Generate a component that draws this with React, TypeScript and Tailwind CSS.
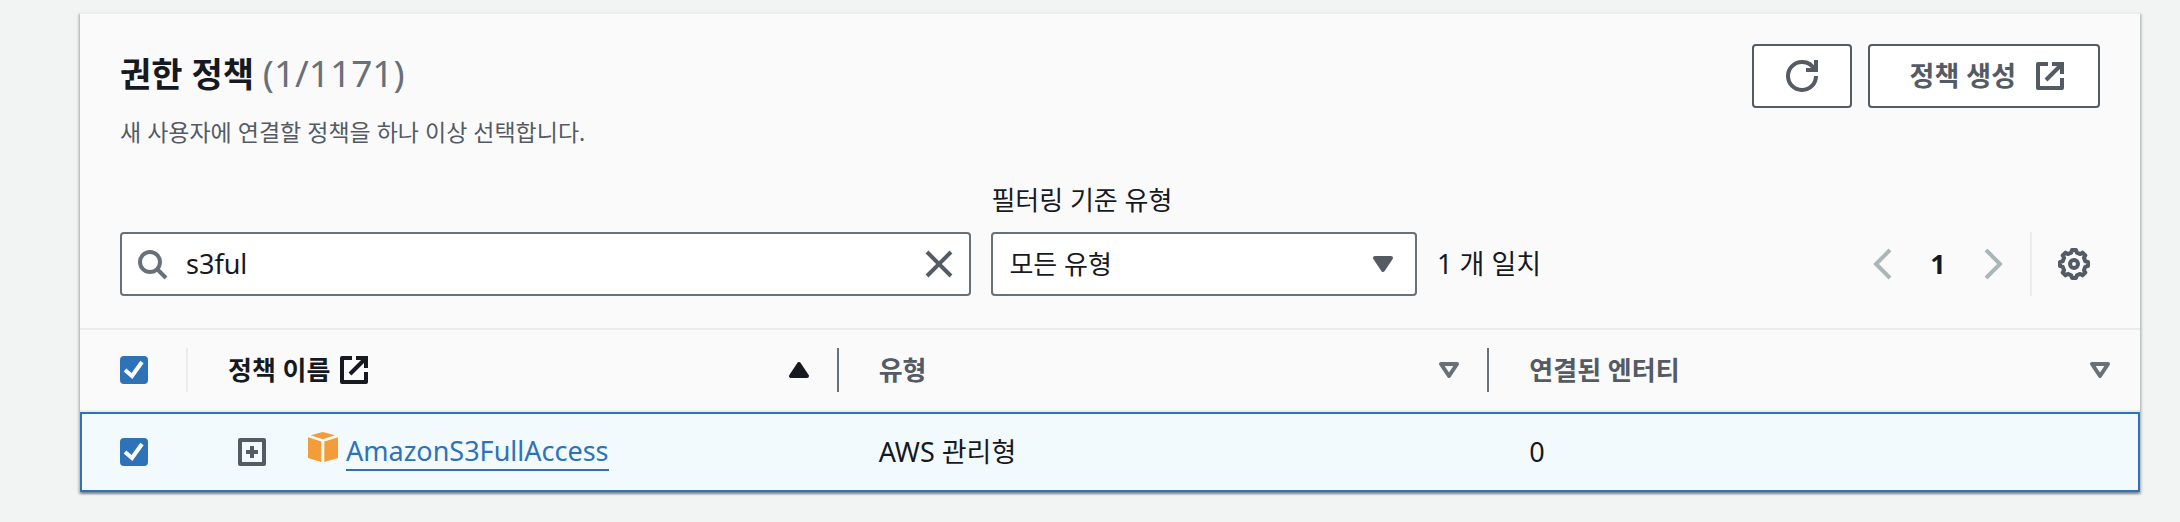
import { useState, type ReactNode } from "react";

const controlBorder = "rounded-[4px] border-2 border-[#687078] bg-white";
const btnNormal =
  "flex h-16 items-center justify-center rounded-[4px] border-2 border-[#545b64] bg-white font-bold text-[#545b64]";

// ─── icons ───────────────────────────────────────────────────────────────────

function Icon({ children, className = "" }: { children: ReactNode; className?: string }) {
  return (
    <svg
      viewBox="0 0 16 16"
      className={`size-8 shrink-0 ${className}`}
      fill="none"
      stroke="currentColor"
      strokeWidth={2}
      aria-hidden="true"
    >
      {children}
    </svg>
  );
}

const ExternalIcon = ({ className }: { className?: string }) => (
  <Icon className={className}>
    <path d="M9 2h5v5" />
    <path d="M6 10l8-8" />
    <path strokeLinejoin="round" d="M14 9.05V14H2V2h5" />
  </Icon>
);

const RefreshIcon = () => (
  <Icon>
    <path d="M10 5h5V0" />
    <path strokeLinejoin="round" d="M15 8a6.957 6.957 0 0 1-7 7 6.957 6.957 0 0 1-7-7 6.957 6.957 0 0 1 7-7 6.87 6.87 0 0 1 6.3 4" />
  </Icon>
);

const SearchIcon = ({ className }: { className?: string }) => (
  <Icon className={className}>
    <circle cx="7" cy="7" r="5" />
    <path d="M15 15l-4.5-4.5" />
  </Icon>
);

const GearIcon = () => (
  <Icon>
    <path
      strokeLinejoin="round"
      d="M7 1h2l.4 1.3 1.7.75 1.14-.71 1.42 1.42-.71 1.13.75 1.81L15 7v2l-1.3.3-.75 1.81.71 1.13-1.42 1.42-1.14-.71-1.7.75L9 15H7l-.4-1.3-1.7-.75-1.14.71-1.42-1.42.71-1.13-.75-1.81L1 9V7l1.3-.3.75-1.81-.71-1.13 1.42-1.42 1.14.71 1.7-.75z"
    />
    <circle cx="8" cy="8" r="2" />
  </Icon>
);

const CubeIcon = () => (
  <svg viewBox="0 0 30 30" className="size-[30px] shrink-0 fill-[#f29d38]" aria-hidden="true">
    <path d="M14.7 0L27 3.3 14.7 7.3 2.7 3.3z" />
    <path d="M0 5.2l13.3 4.4V30L0 26z" />
    <path d="M30 5.2L16.3 9.6V30L30 26z" />
  </svg>
);

function SortIcon({ sort }: { sort: "asc" | "none" }) {
  return sort === "asc" ? (
    <Icon>
      <path strokeLinejoin="round" fill="currentColor" d="M4 11h8L8 5l-4 6z" />
    </Icon>
  ) : (
    <Icon className="text-[#687078]">
      <path strokeLinejoin="round" d="M4 5h8l-4 6-4-6z" />
    </Icon>
  );
}

// ─── controls ────────────────────────────────────────────────────────────────

function Checkbox({ label, checked, onChange }: { label: string; checked: boolean; onChange: (v: boolean) => void }) {
  return (
    <label className="grid size-7">
      <input
        type="checkbox"
        checked={checked}
        onChange={(e) => onChange(e.target.checked)}
        aria-label={label}
        className="col-start-1 row-start-1 size-7 appearance-none rounded-[4px] border-2 border-[#687078] bg-white checked:border-[#2e72b8] checked:bg-[#2e72b8]"
      />
      {checked && (
        <svg viewBox="0 0 14 14" className="pointer-events-none col-start-1 row-start-1 size-7" fill="none" stroke="#fff" strokeWidth={2} aria-hidden="true">
          <path d="M2.5 7L6 10l5-7" />
        </svg>
      )}
    </label>
  );
}

function HeaderCell({
  children,
  sort,
  last = false,
}: {
  children: ReactNode;
  sort: "asc" | "none";
  last?: boolean;
}) {
  return (
    <th
      scope="col"
      aria-sort={sort === "asc" ? "ascending" : "none"}
      className={`border-y-2 border-[#eaeded] py-[18px] text-left text-[26px] font-bold ${sort === "asc" ? "text-[#16191f]" : "text-[#545b64]"}`}
    >
      <div className={`flex h-11 items-center justify-between pl-10 ${last ? "pr-6" : "border-r-2 border-[#687078] pr-[22px]"}`}>
        <span className="flex items-center gap-2">{children}</span>
        <button type="button" aria-label="정렬">
          <SortIcon sort={sort} />
        </button>
      </div>
    </th>
  );
}

export default function App() {
  const [query, setQuery] = useState("s3ful");
  const [type, setType] = useState("모든 유형");
  const [selected, setSelected] = useState(true);

  const cell = "h-20 border-y-2 border-[#2e72b8] bg-[#f2fafd] p-0 pl-10";

  return (
    <main className="min-h-screen bg-[#f2f3f3] pt-3 pr-10 pb-[30px] pl-20 font-['Noto_Sans','Noto_Sans_CJK_KR',sans-serif] text-[27px] leading-9 text-[#16191f]">
      <section className="border-t-2 border-[#eaeded] bg-[#fafafa] shadow-[0_2px_2px_0_rgba(0,28,36,0.3),2px_2px_2px_0_rgba(0,28,36,0.15),-2px_2px_2px_0_rgba(0,28,36,0.15)]">
        <header className="flex items-start justify-between px-10 pt-[30px]">
          <div>
            <h2 className="text-[34px] leading-[60px] font-bold">
              권한 정책 <span className="text-[37px] leading-none font-normal text-[#687078]">(1/1171)</span>
            </h2>
            <p className="text-[23px] leading-[56px] text-[#545b64]">새 사용자에 연결할 정책을 하나 이상 선택합니다.</p>
          </div>
          <div className="flex gap-4">
            <button type="button" className={`${btnNormal} w-[100px]`} aria-label="새로 고침">
              <RefreshIcon />
            </button>
            <button type="button" className={`${btnNormal} gap-[18px] pr-8 pl-10`}>
              정책 생성
              <ExternalIcon />
            </button>
          </div>
        </header>

        <div className="flex items-end gap-5 px-10 pt-[22px] pb-8">
          <div className={`flex h-16 w-[43%] items-center px-[14px] ${controlBorder}`}>
            <SearchIcon className="text-[#687078]" />
            <input
              value={query}
              onChange={(e) => setQuery(e.target.value)}
              aria-label="정책 검색"
              className="min-w-0 flex-1 bg-transparent px-[18px] outline-none"
            />
            <button type="button" onClick={() => setQuery("")} className="text-[#545b64]" aria-label="지우기">
              <Icon>
                <path d="M2 2l12 12M14 2L2 14" />
              </Icon>
            </button>
          </div>

          <div className="w-[21.5%] text-[26px]">
            <label htmlFor="policy-type" className="mb-[14px] block">
              필터링 기준 유형
            </label>
            <div className="relative">
              <select
                id="policy-type"
                value={type}
                onChange={(e) => setType(e.target.value)}
                className={`h-16 w-full appearance-none px-4 ${controlBorder}`}
              >
                <option>모든 유형</option>
                <option>AWS 관리형</option>
                <option>고객 관리형</option>
              </select>
              <Icon className="pointer-events-none absolute top-4 right-[18px] text-[#545b64]">
                <path strokeLinejoin="round" fill="currentColor" d="M4 5h8l-4 6-4-6z" />
              </Icon>
            </div>
          </div>

          <span className="flex h-16 items-center">1 개 일치</span>

          <div className="ml-auto flex h-16 items-center">
            <nav className="flex items-center" aria-label="페이지">
              <button type="button" className="text-[#aab7b8]" aria-label="이전 페이지">
                <Icon>
                  <path d="M12 1L5 8l7 7" />
                </Icon>
              </button>
              <button type="button" className="w-20 text-center font-bold" aria-current="page">
                1
              </button>
              <button type="button" className="text-[#aab7b8]" aria-label="다음 페이지">
                <Icon>
                  <path d="M4 1l7 7-7 7" />
                </Icon>
              </button>
            </nav>
            <div className="ml-5 flex h-16 items-center border-l-2 border-[#eaeded] pr-[10px] pl-[26px]">
              <button type="button" className="text-[#545b64]" aria-label="기본 설정">
                <GearIcon />
              </button>
            </div>
          </div>
        </div>

        <table className="w-full table-fixed border-separate border-spacing-0">
          <thead>
            <tr>
              <th scope="col" className="w-[108px] border-y-2 border-[#eaeded] p-0">
                <div className="flex h-11 items-center border-r-2 border-[#eaeded] pl-10">
                  <Checkbox label="모두 선택" checked={selected} onChange={setSelected} />
                </div>
              </th>
              <HeaderCell sort="asc">
                정책 이름
                <ExternalIcon />
              </HeaderCell>
              <HeaderCell sort="none">유형</HeaderCell>
              <HeaderCell sort="none" last>
                연결된 엔터티
              </HeaderCell>
            </tr>
          </thead>
          <tbody>
            <tr>
              <td className={`${cell} border-l-2 pl-[38px]`}>
                <Checkbox label="AmazonS3FullAccess 선택" checked={selected} onChange={setSelected} />
              </td>
              <td className={cell}>
                <div className="flex items-center pl-2">
                  <button type="button" className="text-[#545b64]" aria-label="펼치기">
                    <Icon>
                      <path strokeLinejoin="round" d="M2 2h12v12H2z" />
                      <path d="M8 5v6M5 8h6" />
                    </Icon>
                  </button>
                  <span className="ml-10 flex items-center gap-2">
                    <span className="pb-[10px]">
                      <CubeIcon />
                    </span>
                    <a href="#policy" className="border-b-2 border-[#2e72b8] text-[#2e72b8]">
                      AmazonS3FullAccess
                    </a>
                  </span>
                </div>
              </td>
              <td className={cell}>AWS 관리형</td>
              <td className={`${cell} border-r-2`}>0</td>
            </tr>
          </tbody>
        </table>
      </section>
    </main>
  );
}
